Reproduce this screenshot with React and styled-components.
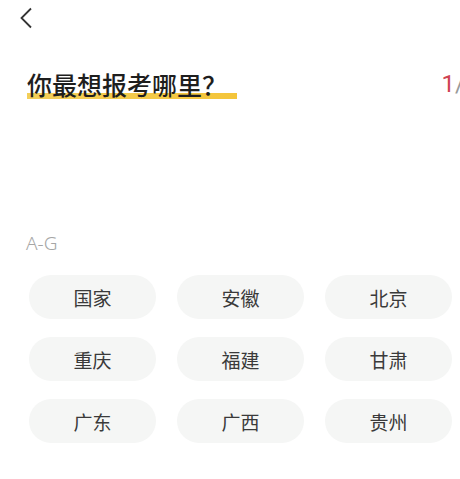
import React from 'react'
import styled, { createGlobalStyle } from 'styled-components'

const GlobalStyle = createGlobalStyle`
  html, body {
    margin: 0;
    padding: 0;
    background: #ffffff;
    font-family: "Noto Sans CJK SC", "Noto Sans", sans-serif;
  }
`

const Page = styled.div`
  width: 460px;
  height: 479px;
  overflow: hidden;
  background: #fff;
`

const NavBar = styled.div`
  height: 36px;
  display: flex;
  align-items: center;
  padding-left: 17px;
`

const BackButton = styled.button`
  border: none;
  background: none;
  padding: 0;
  width: 18px;
  height: 24px;
  display: flex;
  align-items: center;
  justify-content: center;
`

const Header = styled.div`
  margin-top: 30px;
  display: flex;
  justify-content: space-between;
  align-items: center;
  padding-left: 27px;
  white-space: nowrap;
`

const Title = styled.h1`
  position: relative;
  margin: 0;
  font-size: 25px;
  line-height: 36px;
  font-weight: 500;
  color: #1e1e1e;
  padding-right: 10px;
  z-index: 0;
  &::after {
    content: '';
    position: absolute;
    left: 0;
    right: 0;
    bottom: 3px;
    height: 6px;
    background: linear-gradient(90deg, #f3cf5a 0%, #f4c53a 100%);
    z-index: -1;
  }
`

const Step = styled.div`
  font-family: "Roboto", "Noto Sans", sans-serif;
  font-size: 24px;
  color: #999;
  margin-right: -5px;
  span {
    color: #cf4352;
  }
`

const Section = styled.div`
  margin-top: 128px;
  padding-left: 29px;
`

const Group = styled.div`
  font-family: "Noto Sans", sans-serif;
  font-size: 19px;
  font-weight: 300;
  color: #a6a6a6;
  line-height: 26px;
  margin-left: -3px;
`

const Grid = styled.div`
  margin-top: 19px;
  display: grid;
  grid-template-columns: repeat(3, 127px);
  column-gap: 21px;
  row-gap: 18px;
`

const Chip = styled.div`
  height: 44px;
  border-radius: 22px;
  background: #f5f6f5;
  display: flex;
  align-items: center;
  justify-content: center;
  font-size: 19px;
  color: #3a3a3a;
`

const provinces = ['国家', '安徽', '北京', '重庆', '福建', '甘肃', '广东', '广西', '贵州']

export default function App() {
  return (
    <Page>
      <GlobalStyle />
      <NavBar>
        <BackButton>
          <svg width="14" height="22" viewBox="0 0 14 22">
            <path d="M12 1.5 L2.5 11 L12 20.5" fill="none" stroke="#333" strokeWidth="1.8" />
          </svg>
        </BackButton>
      </NavBar>
      <Header>
        <Title>你最想报考哪里？</Title>
        <Step><span>1</span>/</Step>
      </Header>
      <Section>
        <Group>A-G</Group>
        <Grid>
          {provinces.map((p) => (
            <Chip key={p}>{p}</Chip>
          ))}
        </Grid>
      </Section>
    </Page>
  )
}
